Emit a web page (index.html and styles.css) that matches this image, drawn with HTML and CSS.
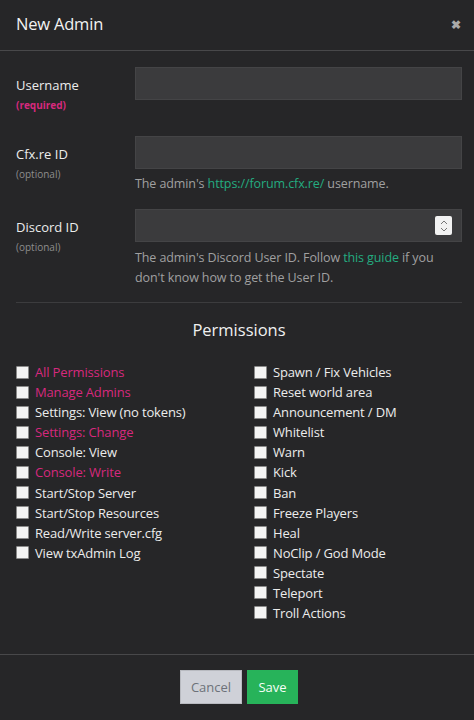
FILE: index.html
```html
<!DOCTYPE html>
<html>
<head>
<meta charset="utf-8">
<link rel="stylesheet" href="styles.css">
</head>
<body>
<div class="modal">
  <div class="header">
    <div class="title">New Admin</div>
    <div class="close">&#x2716;</div>
  </div>
  <div class="body">
    <div class="field f1">
      <div class="label"><div class="name">Username</div><div class="hint req">(required)</div></div>
      <div class="control"><div class="input"></div></div>
    </div>
    <div class="field f2">
      <div class="label"><div class="name">Cfx.re ID</div><div class="hint">(optional)</div></div>
      <div class="control"><div class="input"></div>
        <div class="help">The admin's <span class="link">https://forum.cfx.re/</span> username.</div></div>
    </div>
    <div class="field f3">
      <div class="label"><div class="name">Discord ID</div><div class="hint">(optional)</div></div>
      <div class="control"><div class="input"><div class="spin"><svg width="10" height="14" viewBox="0 0 10 14"><path d="M2 5 L5 2 L8 5" fill="none" stroke="#777" stroke-width="1"/><path d="M2 9 L5 12 L8 9" fill="none" stroke="#777" stroke-width="1"/></svg></div></div>
        <div class="help">The admin's Discord User ID. Follow <span class="link">this guide</span> if you don't know how to get the User ID.</div></div>
    </div>
    <div class="divider"></div>
    <div class="perm-title">Permissions</div>
    <div class="perms">
      <div class="col">
        <div class="perm pink"><span class="box"></span>All Permissions</div>
        <div class="perm pink"><span class="box"></span>Manage Admins</div>
        <div class="perm"><span class="box"></span>Settings: View (no tokens)</div>
        <div class="perm pink"><span class="box"></span>Settings: Change</div>
        <div class="perm"><span class="box"></span>Console: View</div>
        <div class="perm pink"><span class="box"></span>Console: Write</div>
        <div class="perm"><span class="box"></span>Start/Stop Server</div>
        <div class="perm"><span class="box"></span>Start/Stop Resources</div>
        <div class="perm"><span class="box"></span>Read/Write server.cfg</div>
        <div class="perm"><span class="box"></span>View txAdmin Log</div>
      </div>
      <div class="col">
        <div class="perm"><span class="box"></span>Spawn / Fix Vehicles</div>
        <div class="perm"><span class="box"></span>Reset world area</div>
        <div class="perm"><span class="box"></span>Announcement / DM</div>
        <div class="perm"><span class="box"></span>Whitelist</div>
        <div class="perm"><span class="box"></span>Warn</div>
        <div class="perm"><span class="box"></span>Kick</div>
        <div class="perm"><span class="box"></span>Ban</div>
        <div class="perm"><span class="box"></span>Freeze Players</div>
        <div class="perm"><span class="box"></span>Heal</div>
        <div class="perm"><span class="box"></span>NoClip / God Mode</div>
        <div class="perm"><span class="box"></span>Spectate</div>
        <div class="perm"><span class="box"></span>Teleport</div>
        <div class="perm"><span class="box"></span>Troll Actions</div>
      </div>
    </div>
  </div>
  <div class="footer">
    <div class="btn cancel">Cancel</div>
    <div class="btn save">Save</div>
  </div>
</div>
</body>
</html>
```
FILE: styles.css
```css
html, body { margin: 0; padding: 0; background: #262628; }
body { font-family: "Open Sans", "Noto Sans", sans-serif; color: #e4e4e4; width: 474px; height: 720px; overflow: hidden; }
.modal { display: flex; flex-direction: column; height: 720px; }
.header { height: 51px; border-bottom: 1px solid #48484a; display: flex; align-items: center; justify-content: space-between; padding: 0 13px 3px 16px; box-sizing: border-box; }
.title { font-size: 16.5px; color: #f2f2f2; letter-spacing: -0.2px; }
.close { font-size: 12px; color: #aaa; font-weight: bold; margin-top: 2px; }
.body { padding: 16px 12px 0 16px; flex: 1; }
.field { display: flex; }
.f1 { margin-bottom: 24px; }
.f2 { margin-bottom: 15px; }
.f3 { margin-bottom: 14px; }
.label { width: 119px; padding-top: 9px; }
.name { font-size: 13px; line-height: 18px; color: #ececec; }
.hint { font-size: 10px; line-height: 14px; margin-top: 4px; color: #8d8d8d; }
.hint.req { color: #d6297e; font-weight: bold; }
.control { flex: 1; }
.input { height: 33px; background: #3b3b3d; border: 1px solid #444446; box-sizing: border-box; position: relative; }
.spin { position: absolute; right: 9px; top: 6px; width: 17px; height: 19px; background: #f2f2f2; border-radius: 2px; display: flex; align-items: center; justify-content: center; }
.help { font-size: 12.5px; line-height: 20px; color: #a0a0a0; margin-top: 5px; letter-spacing: -0.1px; }
.f3 .help { margin-top: 6px; }
.link { color: #24ac80; }
.divider { border-top: 1px solid #3c3c3e; }
.perm-title { text-align: center; font-size: 16.5px; color: #f0f0f0; margin-top: 16px; line-height: 22px; }
.perms { display: flex; margin-top: 21px; }
.col { width: 238px; }
.col + .col { width: auto; }
.perm { display: flex; align-items: center; height: 20.08px; font-size: 13px; color: #ececec; letter-spacing: -0.15px; }
.perm.pink { color: #d6297e; }
.box { width: 13px; height: 13px; background: #f4f4f4; border: 1px solid #8a8a8a; border-radius: 1px; margin-right: 6px; flex: none; box-sizing: border-box; }
.footer { height: 66px; border-top: 1px solid #48484a; display: flex; justify-content: center; align-items: flex-start; padding: 15px 0 0 4px; box-sizing: border-box; gap: 5px; }
.btn { height: 34px; display: flex; align-items: center; justify-content: center; font-size: 13px; box-sizing: border-box; }
.cancel { width: 62px; background: #cfd1d8; color: #6d7179; border: 1px solid #b8bac0; }
.save { width: 51px; background: #27b35a; color: #f6fff8; }
```
